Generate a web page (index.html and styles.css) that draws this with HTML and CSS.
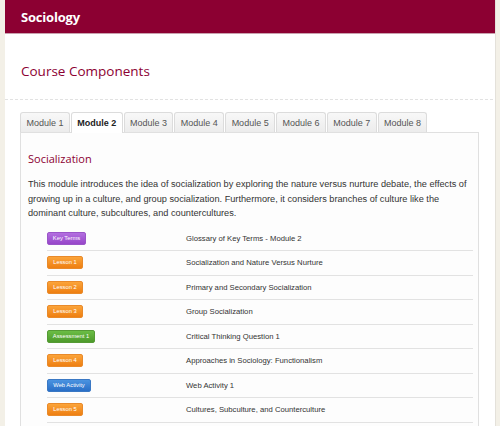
FILE: index.html
```html
<!DOCTYPE html>
<html>
<head>
<meta charset="utf-8">
<link rel="stylesheet" href="styles.css">
</head>
<body>
<div class="page">
  <header class="topbar"><h1 class="brand">Sociology</h1></header>
  <div class="intro"><h2 class="section-title">Course Components</h2></div>
  <div class="content">
    <ul class="tabs">
      <li class="tab">Module 1</li>
      <li class="tab active">Module 2</li>
      <li class="tab">Module 3</li>
      <li class="tab">Module 4</li>
      <li class="tab">Module 5</li>
      <li class="tab">Module 6</li>
      <li class="tab">Module 7</li>
      <li class="tab">Module 8</li>
    </ul>
    <div class="panel">
      <h3 class="module-title">Socialization</h3>
      <p class="module-desc">This module introduces the idea of socialization by exploring the nature versus nurture debate, the effects of growing up in a culture, and group socialization. Furthermore, it considers branches of culture like the dominant culture, subcultures, and countercultures.</p>
      <div class="items">
        <div class="row"><span class="cell-badge"><span class="badge purple">Key Terms</span></span><span class="cell-title">Glossary of Key Terms - Module 2</span></div>
        <div class="row"><span class="cell-badge"><span class="badge orange">Lesson 1</span></span><span class="cell-title">Socialization and Nature Versus Nurture</span></div>
        <div class="row"><span class="cell-badge"><span class="badge orange">Lesson 2</span></span><span class="cell-title">Primary and Secondary Socialization</span></div>
        <div class="row"><span class="cell-badge"><span class="badge orange">Lesson 3</span></span><span class="cell-title">Group Socialization</span></div>
        <div class="row"><span class="cell-badge"><span class="badge green">Assessment 1</span></span><span class="cell-title">Critical Thinking Question 1</span></div>
        <div class="row"><span class="cell-badge"><span class="badge orange">Lesson 4</span></span><span class="cell-title">Approaches in Sociology: Functionalism</span></div>
        <div class="row"><span class="cell-badge"><span class="badge blue">Web Activity</span></span><span class="cell-title">Web Activity 1</span></div>
        <div class="row"><span class="cell-badge"><span class="badge orange">Lesson 5</span></span><span class="cell-title">Cultures, Subculture, and Counterculture</span></div>
      </div>
    </div>
  </div>
</div>
</body>
</html>
```

FILE: styles.css
```css
html, body {
  margin: 0;
  padding: 0;
}
body {
  background: #f3f0e7;
  font-family: "Liberation Sans", Arial, sans-serif;
  color: #333;
}
.page {
  margin: 0 4px 0 5px;
  background: #fff;
  border-right: 1px solid #e4e1da;
  min-height: 426px;
}
.topbar {
  background: #8c0032;
  height: 34px;
  display: flex;
  align-items: center;
  padding-left: 16px;
  border-bottom: 1px solid #c9a1ae;
  box-sizing: border-box;
}
.brand {
  margin: 0;
  font-family: "Open Sans", sans-serif;
  font-weight: 700;
  font-size: 13px;
  color: #fff;
  letter-spacing: -0.2px;
}
.intro {
  padding: 28px 16px 0;
  height: 66px;
  box-sizing: border-box;
  border-bottom: 1px dashed #e2e2e2;
  margin-right: 2px;
}
.section-title {
  margin: 0;
  font-family: "Open Sans", sans-serif;
  font-weight: 400;
  font-size: 13.5px;
  color: #8c0032;
}
.content {
  padding: 12px 16px 0 15px;
}
.tabs {
  list-style: none;
  margin: 0;
  padding: 0;
  display: flex;
  gap: 1px;
  position: relative;
  z-index: 1;
}
.tab {
  height: 20px;
  box-sizing: border-box;
  padding: 0 5.4px;
  display: flex;
  align-items: center;
  font-size: 9px;
  color: #555;
  background: linear-gradient(#f8f8f8, #ececec);
  border: 1px solid #dcdcdc;
  border-bottom: none;
  border-radius: 3px 3px 0 0;
}
.tab.active {
  background: #fff;
  font-weight: 700;
  color: #222;
  height: 21px;
  margin-bottom: -1px;
}
.panel {
  border: 1px solid #e0e0e0;
  background: #fdfdfd;
  padding: 18px 5px 0 7px;
  min-height: 300px;
}
.module-title {
  margin: 0;
  font-family: "Open Sans", sans-serif;
  font-weight: 400;
  font-size: 11px;
  color: #8c0032;
}
.module-desc {
  margin: 11px 0 6px;
  font-size: 9.2px;
  line-height: 14.5px;
  color: #333;
}
.items {
  margin-left: 19px;
}
.row {
  display: flex;
  align-items: center;
  height: 24.5px;
  border-bottom: 1px solid #e2e2e2;
  box-sizing: border-box;
}
.cell-badge {
  width: 139px;
  flex-shrink: 0;
  display: flex;
}
.cell-title {
  font-size: 7.7px;
  color: #333;
}
.badge {
  display: inline-block;
  height: 13px;
  line-height: 11px;
  padding: 0;
  text-align: center;
  white-space: nowrap;
  font-size: 5.8px;
  color: #fff;
  border-radius: 2px;
  box-sizing: border-box;
}
.badge.orange {
  width: 36px;
  background: linear-gradient(#fba43a, #ee7f12);
  border: 1px solid #e98a2a;
}
.badge.purple {
  width: 39px;
  background: linear-gradient(#b36fe0, #9746c9);
  border: 1px solid #9a55c8;
}
.badge.green {
  width: 48px;
  background: linear-gradient(#6bbd45, #4d9a2b);
  border: 1px solid #559a35;
}
.badge.blue {
  width: 44px;
  background: linear-gradient(#4a93e0, #2a6fc7);
  border: 1px solid #3a78c4;
}
```
